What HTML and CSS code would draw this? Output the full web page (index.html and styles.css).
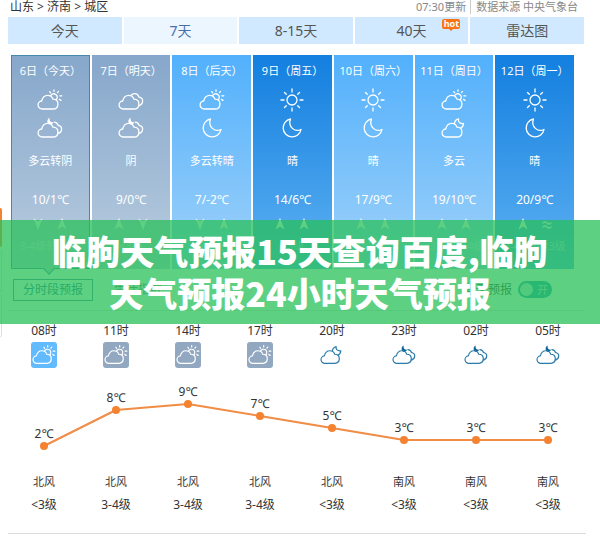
FILE: index.html
```html
<!DOCTYPE html>
<html lang="zh-CN">

	<head>
		<title>临朐天气预报</title>
		<meta charset="utf-8" />
		<link rel="stylesheet" href="styles.css">
	</head>

	<body>
		<svg class="defs">
			<symbol id="cloud" viewBox="0 0 26 22">
				<path d="M5.500 20a4 4 0 0 1-.8-8c.9-3.800 3.300-5.600 6-5.600 2.600 0 4.500 1.400 5.300 3.800 3 .1 4.900 2 4.900 4.700 0 3-1.900 5.100-4.900 5.100z" />
			</symbol>
			<symbol id="cloud-sun" viewBox="0 0 26 22">
				<use href="#cloud" />
				<path d="M13.600 6.800a3.500 3.500 0 1 1 5.600 4" />
				<path d="M17 .800v1.500M12.800 2.600l.9 1.200M21.400 2.400l-.9 1.200M22.800 6.800h2M22.400 10.400l1.600 1" />
			</symbol>
			<symbol id="cloud-moon" viewBox="0 0 26 22">
				<use href="#cloud" />
				<path d="M13.500 6.500c.2-2.500 1.600-4 4-4.600-.6 3 1.400 5 5 4.600 0 2.200-1.200 3.800-2.800 4.600" />
			</symbol>
			<symbol id="overcast" viewBox="0 0 26 22">
				<use href="#cloud" />
				<path d="M13 6.400c1-1.300 2.300-1.900 3.800-1.800 2.100.1 3.600 1.400 4.200 3.500 2.200.4 3.700 1.900 3.600 4-.1 2.200-1.400 3.800-3.600 4.400" />
			</symbol>
			<symbol id="overcast-night" viewBox="0 0 26 22">
				<use href="#cloud" />
				<path d="M17.200 5.200c2.100.2 3.300 1.300 3.900 3.100 2.200.4 3.600 1.800 3.500 3.800-.1 2.200-1.400 3.800-3.600 4.400" />
				<path class="solid" d="M12.600.800c-.4 2.900.6 4.700 3.800 4.600-.7 1.700-2.800 2.600-4.500 1.700-2.200-1.200-2-4.900.7-6.300z" />
			</symbol>
			<symbol id="sun" viewBox="1 1 24 24">
				<circle cx="13" cy="13" r="5" />
				<path d="M13 2v3M13 21v3M2 13h3M21 13h3M5.500 5.500l1.800 1.800M18.700 18.700l1.800 1.800M5.500 20.500l1.800-1.800M18.700 7.300l1.800-1.800" />
			</symbol>
			<symbol id="moon" viewBox="-1 -1 24 24">
				<path d="M9.500 2a9 9 0 1 0 10.500 10.500C14 15.500 6.500 10 9.500 2z" />
			</symbol>
			<symbol id="up" viewBox="0 0 10 12">
				<path class="solid" d="M5 0l4.500 11.500L5 8.500.500 11.500z" />
			</symbol>
			<symbol id="down" viewBox="0 0 10 12">
				<path class="solid" d="M5 12L.500.500 5 3.500 9.500.500z" />
			</symbol>
			<symbol id="breeze" viewBox="0 0 10 12">
				<path d="M1 5q2-2 4 0t4 0M1 9q2-2 4 0t4 0" />
			</symbol>
		</svg>

		<div class="page">
			<div class="crumbs">
				<div>山东 &gt; 济南 &gt; 城区</div>
				<div class="source"><span>07:30更新</span><span class="from">数据来源 中央气象台</span></div>
			</div>
			<div class="tabs">
				<button type="button">今天</button>
				<button type="button" class="active">7天</button>
				<button type="button">8-15天</button>
				<button type="button">40天<span class="hot">hot</span></button>
				<button type="button">雷达图</button>
			</div>

			<div class="days">
				<div class="day gray today">
					<div class="date">6日（今天）</div>
					<svg class="icon"><use href="#cloud-sun" /></svg>
					<svg class="icon"><use href="#overcast-night" /></svg>
					<div class="weather">多云转阴</div>
					<div class="temp">10/1℃</div>
					<div class="wind"><svg><use href="#down" /></svg><svg><use href="#up" /></svg></div>
					<div class="level">3-4级转&lt;3级</div>
				</div>
				<div class="day gray">
					<div class="date">7日（明天）</div>
					<svg class="icon"><use href="#overcast" /></svg>
					<svg class="icon"><use href="#overcast-night" /></svg>
					<div class="weather">阴</div>
					<div class="temp">9/0℃</div>
					<div class="wind"><svg><use href="#up" /></svg><svg><use href="#down" /></svg></div>
					<div class="level">&lt;3级</div>
				</div>
				<div class="day">
					<div class="date">8日（后天）</div>
					<svg class="icon"><use href="#cloud-sun" /></svg>
					<svg class="icon"><use href="#moon" /></svg>
					<div class="weather">多云转晴</div>
					<div class="temp">7/-2℃</div>
					<div class="wind"><svg><use href="#down" /></svg><svg><use href="#up" /></svg></div>
					<div class="level">&lt;3级</div>
				</div>
				<div class="day clear">
					<div class="date">9日（周五）</div>
					<svg class="icon"><use href="#sun" /></svg>
					<svg class="icon"><use href="#moon" /></svg>
					<div class="weather">晴</div>
					<div class="temp">14/6℃</div>
					<div class="wind"><svg><use href="#up" /></svg><svg><use href="#up" /></svg></div>
					<div class="level">&lt;3级</div>
				</div>
				<div class="day">
					<div class="date">10日（周六）</div>
					<svg class="icon"><use href="#sun" /></svg>
					<svg class="icon"><use href="#moon" /></svg>
					<div class="weather">晴</div>
					<div class="temp">17/9℃</div>
					<div class="wind"><svg><use href="#up" /></svg><svg><use href="#up" /></svg></div>
					<div class="level">&lt;3级</div>
				</div>
				<div class="day">
					<div class="date">11日（周日）</div>
					<svg class="icon"><use href="#cloud-sun" /></svg>
					<svg class="icon"><use href="#cloud-moon" /></svg>
					<div class="weather">多云</div>
					<div class="temp">19/10℃</div>
					<div class="wind"><svg><use href="#up" /></svg><svg><use href="#up" /></svg></div>
					<div class="level">&lt;3级转3-4级</div>
				</div>
				<div class="day clear">
					<div class="date">12日（周一）</div>
					<svg class="icon"><use href="#sun" /></svg>
					<svg class="icon"><use href="#moon" /></svg>
					<div class="weather">晴</div>
					<div class="temp">20/9℃</div>
					<div class="wind"><svg><use href="#up" /></svg><svg><use href="#breeze" /></svg></div>
					<div class="level">3-4级转&lt;3级</div>
				</div>
			</div>

			<div class="options">
				<button type="button" class="active">分时段预报</button>
				<button type="button">生活指数</button>
				<label class="switch">蓝天预报<input type="checkbox" checked><span class="track"><i class="knob"></i>开</span></label>
			</div>

			<div class="hours">
				<div>08时<svg class="box blue"><use href="#cloud-sun" /></svg></div>
				<div>11时<svg class="box"><use href="#cloud-sun" /></svg></div>
				<div>14时<svg class="box"><use href="#cloud-sun" /></svg></div>
				<div>17时<svg class="box"><use href="#cloud-sun" /></svg></div>
				<div>20时<svg class="box night"><use href="#cloud-moon" /></svg></div>
				<div>23时<svg class="box night"><use href="#overcast-night" /></svg></div>
				<div>02时<svg class="box night"><use href="#overcast-night" /></svg></div>
				<div>05时<svg class="box night"><use href="#overcast-night" /></svg></div>
			</div>
			<svg class="chart" id="chart"></svg>
			<div class="winds">
				<div>北风<span>&lt;3级</span></div>
				<div>北风<span>3-4级</span></div>
				<div>北风<span>3-4级</span></div>
				<div>北风<span>3-4级</span></div>
				<div>北风<span>&lt;3级</span></div>
				<div>南风<span>&lt;3级</span></div>
				<div>南风<span>&lt;3级</span></div>
				<div>南风<span>&lt;3级</span></div>
			</div>
		</div>

		<div class="side"><i class="orange"></i><i></i><i></i></div>
		<h1 class="banner">临朐天气预报15天查询百度,临朐<br>天气预报24小时天气预报</h1>

		<script>
			var temps = [2, 8, 9, 7, 5, 3, 3, 3];
			var chart = document.getElementById('chart');

			function add(name, attrs, text) {
				var el = document.createElementNS('http://www.w3.org/2000/svg', name);
				for (var key in attrs) {
					el.setAttribute(key, attrs[key]);
				}
				if (text) el.textContent = text;
				chart.appendChild(el);
			}

			function px(i) {
				return (i + 0.5) / temps.length * 100 + '%';
			}

			//每度6像素
			function py(t) {
				return 90 - t * 6;
			}

			for (var i = 1; i < temps.length; i++) {
				add('line', {x1: px(i - 1), y1: py(temps[i - 1]), x2: px(i), y2: py(temps[i])});
			}
			for (i = 0; i < temps.length; i++) {
				add('circle', {cx: px(i), cy: py(temps[i]), r: 4});
				add('text', {x: px(i), y: py(temps[i]) - 8}, temps[i] + '℃');
			}
		</script>
	</body>

</html>
```
FILE: styles.css
```css
body {position: relative;margin: 0;background: #fff;color: #333;font: 12px/16px "Noto Sans", "Noto Sans CJK SC", sans-serif;overflow-x: hidden;}
button {padding: 0;border: 0;background: none;color: inherit;font: inherit;}
svg {fill: none;stroke: #fff;stroke-width: 1.3;stroke-linecap: round;stroke-linejoin: round;}
.solid {fill: currentColor;stroke: none;}
.defs {position: absolute;width: 0;height: 0;}
.page {padding: 0 16px 0 8px;}

.crumbs {display: flex;justify-content: space-between;height: 17px;padding: 0 6px 0 2px;line-height: 14px;}
.source {color: #888;font-size: 11px;}
.from {margin-left: 4px;padding-left: 5px;border-left: 1px solid #ccc;}

.tabs {display: grid;grid-template-columns: repeat(5, 1fr);gap: 2px;}
.tabs button {position: relative;height: 27px;background: #d0e9fe;color: #555;font-size: 14px;}
.tabs .active {background: #ebf6ff;color: #4a6ea9;}
.hot {position: absolute;top: 2px;right: 8px;width: 18px;height: 10px;border-radius: 2px;background: #f97316;color: #fff;font: bold 9px/9px "Noto Sans", sans-serif;}
.hot::after {content: "";position: absolute;left: 7px;top: 10px;border: 2px solid transparent;border-top-color: #f97316;}

.days {display: grid;grid-template-columns: repeat(7, 1fr);gap: 2px;margin: 11px 10px 0 3px;}
.day {display: flex;flex-direction: column;align-items: center;height: 214px;background: linear-gradient(#52b0fc, #a0d2f9);color: #fff;font-size: 11px;}
.gray {background: linear-gradient(#86a7cb, #b9cddf);}
.clear {background: linear-gradient(#137fdf, #5eb1f2);}
.today {position: relative;outline: 1px solid #4789ab;outline-offset: -1px;}
.today::after {content: "";position: absolute;left: 34px;bottom: -4px;width: 7px;height: 7px;border: solid #4789ab;border-width: 0 1px 1px 0;background: #b9cddf;transform: rotate(45deg);}
.date {margin: 8px 0 8px;white-space: nowrap;}
.icon {width: 26px;height: 24px;margin: 1px 0 3px;}
.weather {margin-top: 10px;}
.temp {margin-top: 23px;font-size: 12px;}
.wind {display: flex;gap: 14px;margin: 10px 0 8px;}
.wind svg {width: 10px;height: 12px;}
.level {opacity: .5;white-space: nowrap;}

.options {display: flex;align-items: center;height: 41px;border-bottom: 1px solid #ddd;color: #777;}
.options button {width: 80px;height: 22px;margin-left: 5px;}
.options .active {border: 1px solid #4789ab;color: #24709a;}
.switch {position: relative;display: flex;align-items: center;gap: 6px;margin-left: auto;padding-right: 32px;color: #444;}
.switch input {position: absolute;right: 32px;width: 34px;height: 17px;margin: 0;opacity: 0;}
.track {display: flex;align-items: center;justify-content: space-between;width: 28px;height: 17px;padding: 0 4px 0 2px;border-radius: 9px;background: #2b9fc0;color: #cde;font-size: 11px;}
.knob {width: 13px;height: 13px;border-radius: 50%;background: #cfe8ee;}

.hours, .winds {display: grid;grid-template-columns: repeat(8, 1fr);text-align: center;}
.hours {margin-top: 12px;}
.box {display: block;width: 24px;height: 24px;margin: 3px auto 0;padding: 1px;border-radius: 3px;background: #92a8c1;}
.blue {background: #63bbff;}
.night {background: none;color: #17699b;stroke: #2a7dab;}
.chart {display: block;width: 100%;height: 106px;}
.chart line {stroke: #f08c45;stroke-width: 2;}
.chart circle {fill: #f58230;stroke: none;}
.chart text {fill: #333;stroke: none;font-size: 12px;text-anchor: middle;}
.winds {margin-right: -2px;padding-right: 2px;padding-bottom: 20px;border-bottom: 1px solid #ddd;font-size: 11px;}
.winds span {display: block;margin-top: 7px;font-size: 12px;}

.side {position: absolute;left: 0;top: 208px;width: 2px;}
.side i {display: block;height: 40px;margin-bottom: 3px;border: solid #ddd;border-width: 1px 1px 1px 0;border-radius: 0 2px 2px 0;}
.side .orange {height: 37px;border-color: #f58230;background: #f58230;}
.banner {position: absolute;left: 0;right: 0;top: 220px;margin: 0;padding: 10px 0;background: rgba(40,192,88,.75);color: #fff;font: 900 34px/42px "Noto Sans CJK SC", sans-serif;text-align: center;}
```
